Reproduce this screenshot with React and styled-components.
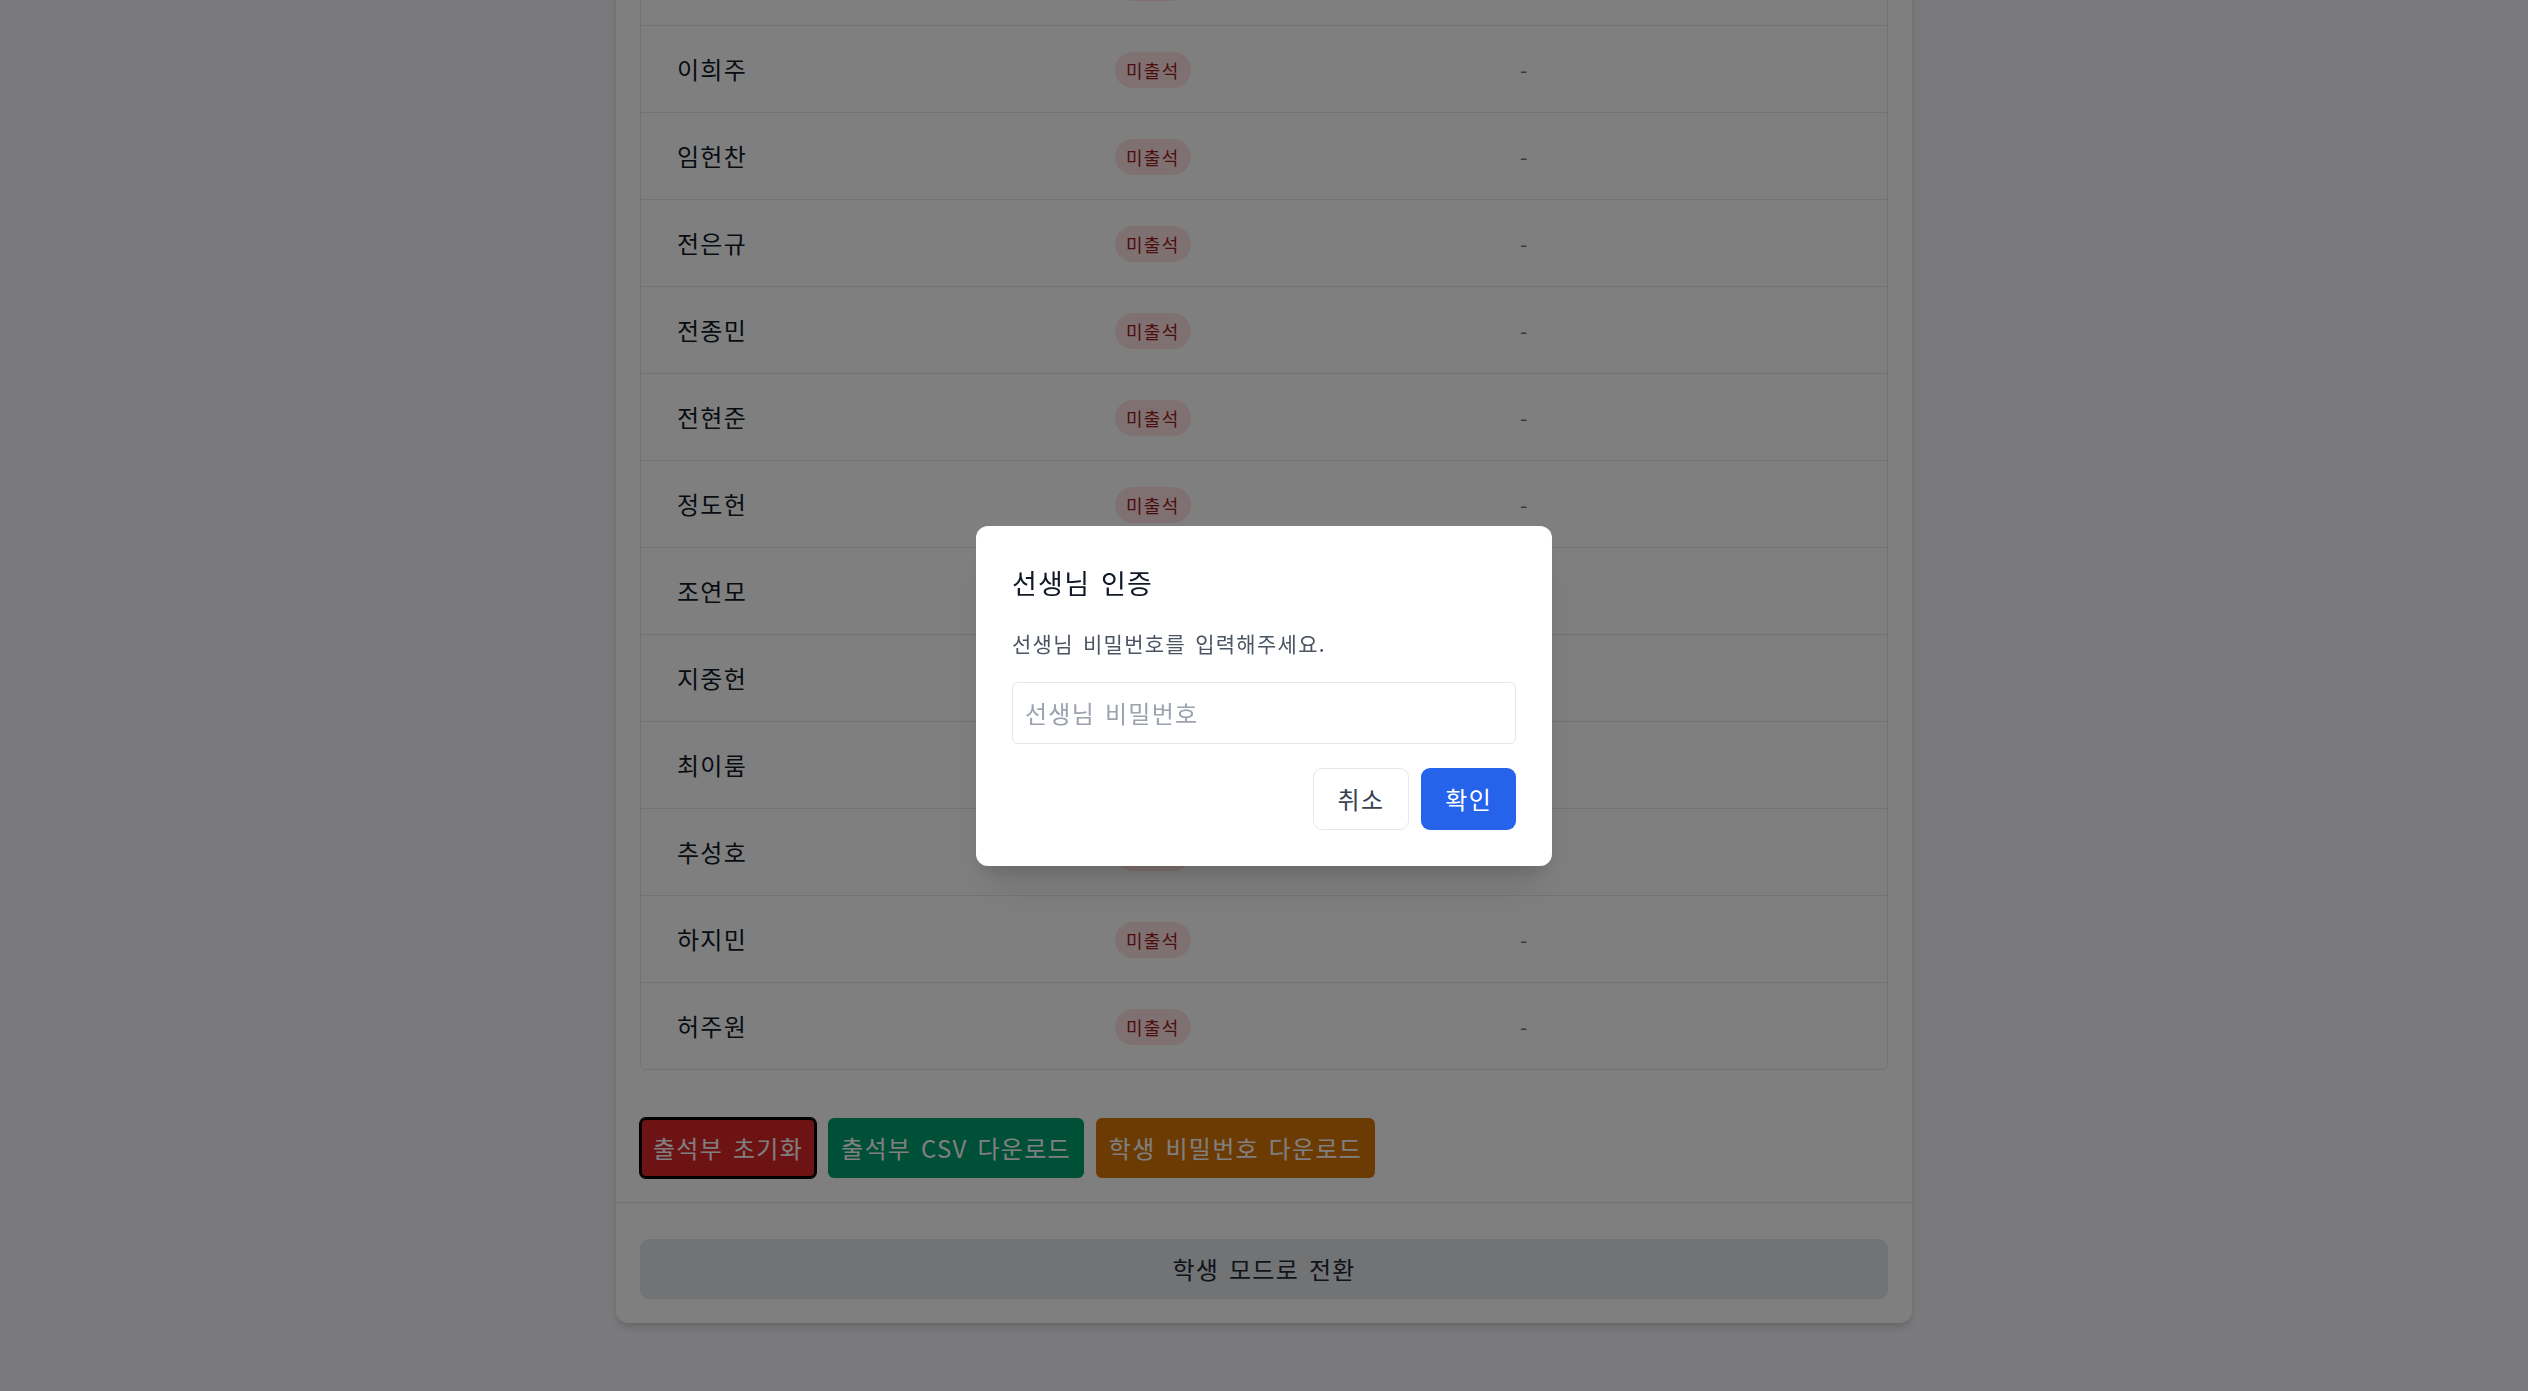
import React from 'react';
import styled, { createGlobalStyle, css } from 'styled-components';

const GlobalStyle = createGlobalStyle`
  html, body {
    margin: 0;
    padding: 0;
  }
  body {
    background: #f4f5f8;
    font-family: 'Noto Sans CJK KR', 'Noto Sans', sans-serif;
    letter-spacing: 0.08em;
    word-spacing: 0.2em;
    color: #111827;
  }
  button, input {
    letter-spacing: inherit;
    word-spacing: inherit;
  }
  *, *::before, *::after { box-sizing: border-box; }
`;

// the page is scrolled to its end: the card sits against the bottom, its top is cut off
const Page = styled.div`
  height: 100vh;
  overflow: hidden;
  display: flex;
  flex-direction: column;
  justify-content: flex-end;
  padding-bottom: 68px;
`;

const Card = styled.div`
  flex-shrink: 0;
  width: 1296px;
  margin: 0 auto;
  background: #fff;
  border-radius: 12px;
  box-shadow: 0 6px 9px -1px rgba(0, 0, 0, 0.1), 0 3px 6px -2px rgba(0, 0, 0, 0.1);
`;

const CardBody = styled.div`
  padding: 36px 24px 24px;
`;

const Heading = styled.h1`
  margin: 0 0 36px;
  font-size: 36px;
  line-height: 48px;
  font-weight: 700;
`;

const Table = styled.div`
  border: 1px solid #e5e7eb;
  border-radius: 6px;
  overflow: hidden;
  margin-bottom: 48px;
`;

const Row = styled.div`
  display: grid;
  grid-template-columns: 438px 405px 1fr;
  align-items: center;
  min-height: 87px;
  background: ${p => (p.$head ? '#f9fafb' : '#fff')};
  & + & { border-top: 1px solid #e5e7eb; }
  &:first-child { min-height: 86px; }
`;

const Cell = styled.div`
  padding: 0 36px;
  font-size: ${p => (p.$small ? '21px' : '24px')};
  line-height: 36px;
  color: ${p => (p.$muted ? '#6b7280' : '#111827')};
  white-space: nowrap;
`;

const HeadCell = styled(Cell)`
  font-size: 18px;
  font-weight: 500;
  color: #6b7280;
`;

const Badge = styled.span`
  display: inline-flex;
  align-items: center;
  height: 36px;
  padding: 0 11px;
  border-radius: 999px;
  background: #fee2e2;
  color: #991b1b;
  font-size: 18px;
  line-height: 24px;
`;

const Actions = styled.div`
  display: flex;
  gap: 12px;
`;

const tones = {
  red: '#dc2626',
  green: '#009e6f',
  amber: '#d97706',
};

const ActionButton = styled.button`
  height: 60px;
  padding: 0 13px;
  border: none;
  border-radius: 6px;
  background: ${p => tones[p.$tone]};
  color: #fff;
  font-family: inherit;
  font-size: 24px;
  line-height: 36px;
  white-space: nowrap;
  cursor: pointer;
  ${p => p.$focused && css`
    box-shadow: 0 0 0 1px #000, inset 0 0 0 2px #000;
  `}
`;

const Footer = styled.div`
  border-top: 1px solid #e5e7eb;
  padding: 36px 24px 24px;
`;

const ModeButton = styled.button`
  display: block;
  width: 100%;
  height: 60px;
  border: none;
  border-radius: 9px;
  background: #e5e7eb;
  color: #1f2937;
  font-family: inherit;
  font-size: 24px;
  line-height: 36px;
  cursor: pointer;
`;

const Overlay = styled.div`
  position: fixed;
  inset: 0;
  background: rgba(0, 0, 0, 0.5);
  display: flex;
  align-items: center;
  justify-content: center;
`;

const Dialog = styled.div`
  width: 576px;
  padding: 36px;
  background: #fff;
  border-radius: 12px;
  box-shadow: 0 30px 38px -8px rgba(0, 0, 0, 0.1), 0 12px 15px -6px rgba(0, 0, 0, 0.1);
`;

const DialogTitle = styled.h2`
  margin: 0 0 24px;
  font-size: 27px;
  line-height: 42px;
  font-weight: 400;
  color: #111827;
`;

const DialogText = styled.p`
  margin: 0 0 24px;
  font-size: 21px;
  line-height: 30px;
  color: #4b5563;
`;

const PasswordInput = styled.input`
  display: block;
  width: 100%;
  height: 62px;
  margin: 0 0 24px;
  padding: 0 12px;
  border: 1px solid #e5e7eb;
  border-radius: 6px;
  font-family: inherit;
  font-size: 24px;
  color: #111827;
  outline: none;
  &::placeholder { color: #9ca3af; }
`;

const DialogActions = styled.div`
  display: flex;
  justify-content: flex-end;
  gap: 12px;
`;

const DialogButton = styled.button`
  height: 62px;
  padding: 0 24px;
  border-radius: 9px;
  font-family: inherit;
  font-size: 24px;
  line-height: 36px;
  cursor: pointer;
  ${p => (p.$primary
    ? css`
      border: none;
      background: #2563eb;
      color: #fff;
    `
    : css`
      border: 1px solid #e5e7eb;
      background: #fff;
      color: #374151;
    `)}
`;

const students = [
  '김민준', '박서연', '송하늘', '오지후', '윤서진', '이도윤',
  '이희주', '임헌찬', '전은규', '전종민', '전현준', '정도헌',
  '조연모', '지중헌', '최이룸', '추성호', '하지민', '허주원',
];

export default function App() {
  return (
    <>
      <GlobalStyle />
      <Page>
        <Card>
          <CardBody>
            <Heading>출석 현황</Heading>
            <Table>
              <Row $head>
                <HeadCell>이름</HeadCell>
                <HeadCell>상태</HeadCell>
                <HeadCell>출석 시간</HeadCell>
              </Row>
              {students.map(name => (
                <Row key={name}>
                  <Cell>{name}</Cell>
                  <Cell><Badge>미출석</Badge></Cell>
                  <Cell $small $muted>-</Cell>
                </Row>
              ))}
            </Table>
            <Actions>
              <ActionButton $tone="red" $focused>출석부 초기화</ActionButton>
              <ActionButton $tone="green">출석부 CSV 다운로드</ActionButton>
              <ActionButton $tone="amber">학생 비밀번호 다운로드</ActionButton>
            </Actions>
          </CardBody>
          <Footer>
            <ModeButton>학생 모드로 전환</ModeButton>
          </Footer>
        </Card>
      </Page>
      <Overlay>
        <Dialog>
          <DialogTitle>선생님 인증</DialogTitle>
          <DialogText>선생님 비밀번호를 입력해주세요.</DialogText>
          <PasswordInput type="password" placeholder="선생님 비밀번호" />
          <DialogActions>
            <DialogButton>취소</DialogButton>
            <DialogButton $primary>확인</DialogButton>
          </DialogActions>
        </Dialog>
      </Overlay>
    </>
  );
}
